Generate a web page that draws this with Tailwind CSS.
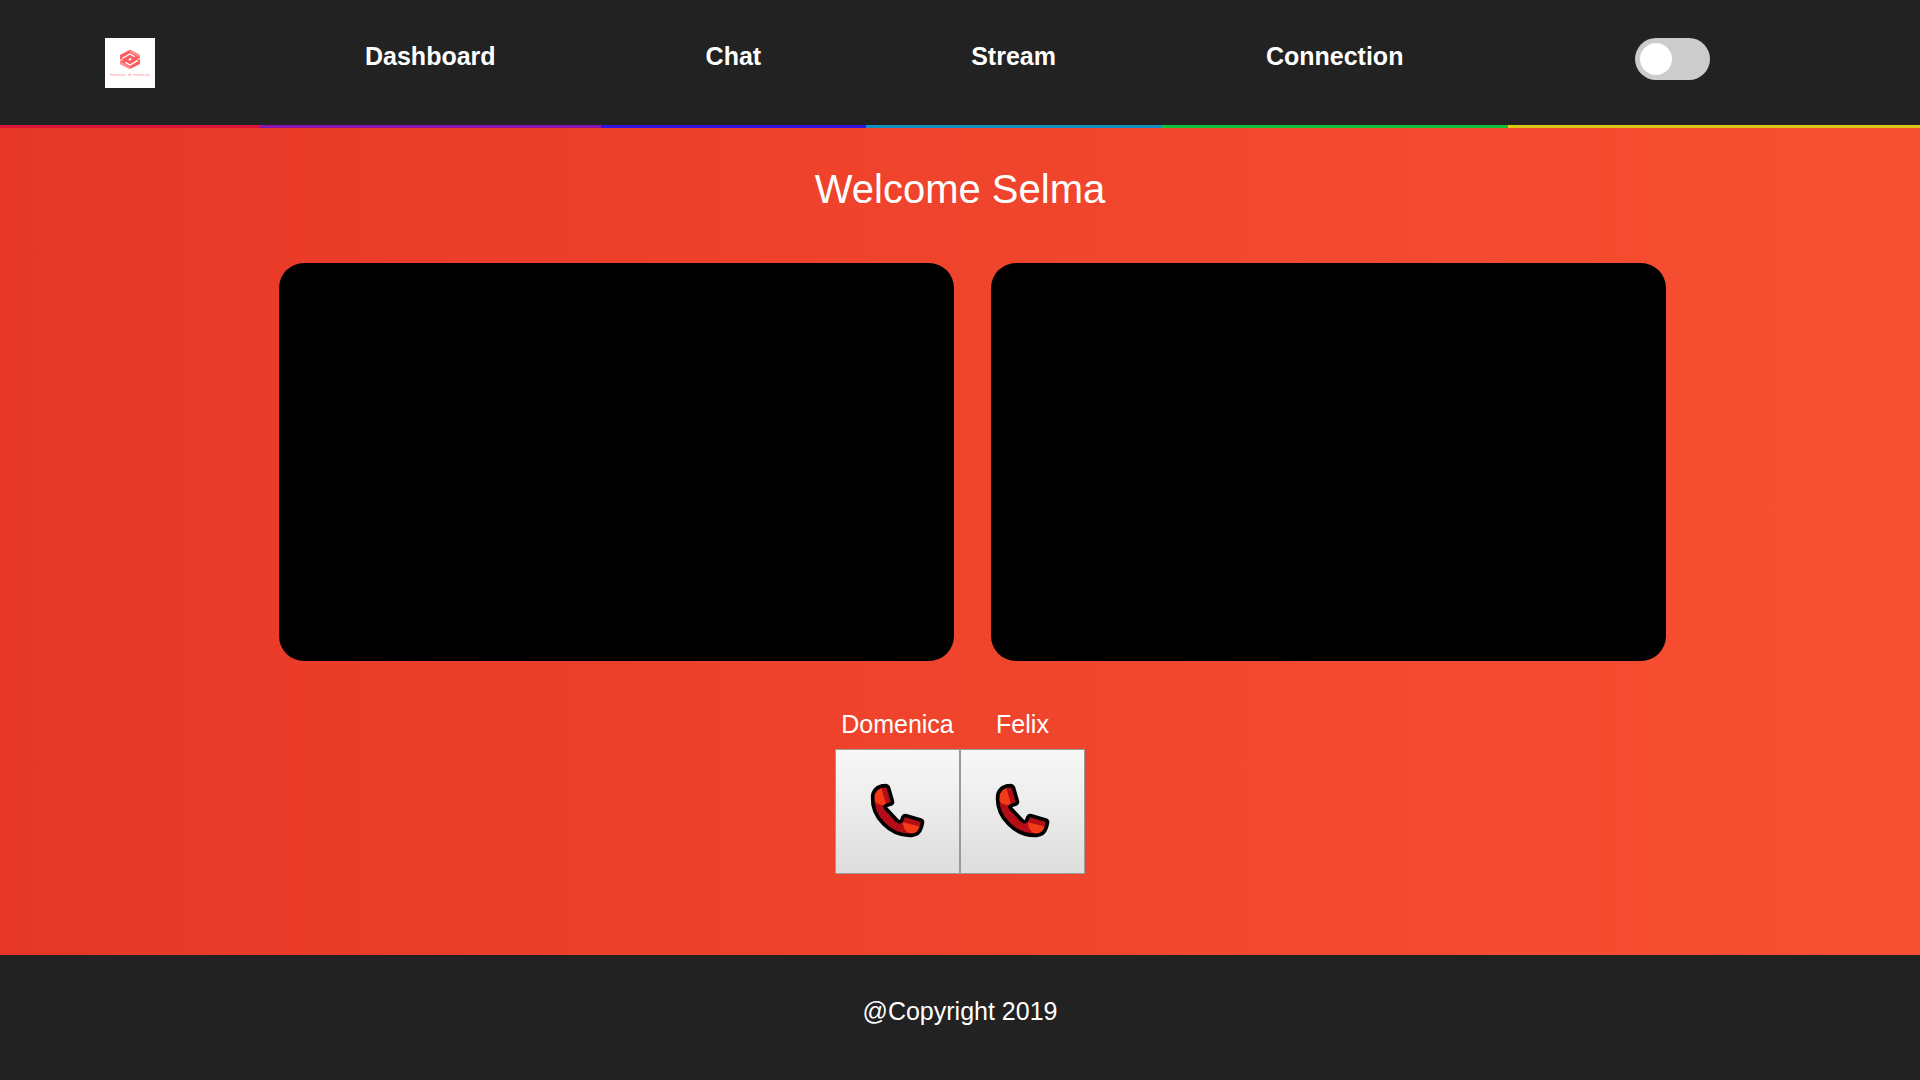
<!DOCTYPE html>
<html lang="en">
<head>
  <meta charset="UTF-8">
  <meta name="viewport" content="width=device-width, initial-scale=1">
  <title>Stream</title>
  <script src="https://cdn.jsdelivr.net/npm/@tailwindcss/browser@4"></script>
</head>
<body class="min-h-screen flex flex-col bg-linear-to-r/srgb from-[#e73827] to-[#f85032] font-['Liberation_Sans',Arial,sans-serif] text-[25px] leading-[38px] text-white">

  <header class="bg-[#222]">
    <nav class="flex h-32 font-bold">
      <a href="#" aria-label="Home" class="pt-[38px] px-[105px] border-b-3 border-[#dc143c]">
        <svg class="block size-[50px] bg-white" viewBox="45 39 150 150">
          <path fill="#ff5c5f" d="M120 74L150 90V117L120 132L90 117V90Z"/>
          <path fill="#ff8f90" d="M120 74L150 90V97L120 82ZM90 109L120 125V132L90 117Z"/>
          <g fill="none" stroke="#fff" stroke-width="4">
            <path d="M97 100L120 87L134 95"/>
            <path d="M143 107L120 120L106 112"/>
            <path d="M88 105H98M142 102H152" stroke-width="3"/>
            <path d="M116 105L124 101" stroke-width="5"/>
          </g>
          <text x="120" y="152" text-anchor="middle" font-family="Liberation Mono, monospace" font-size="9" font-weight="400" fill="#ff7a7c">Formateur de Formation</text>
        </svg>
      </a>
      <a href="#" class="pt-[37px] px-[105px] border-b-3 border-[#8a14ae]">Dashboard</a>
      <a href="#" class="pt-[37px] px-[105px] border-b-3 border-[#3214e0]">Chat</a>
      <a href="#" class="pt-[37px] px-[105px] border-b-3 border-[#148fc0]">Stream</a>
      <a href="#" class="pt-[37px] px-[105px] border-b-3 border-[#14be3c]">Connection</a>
      <div class="grow pt-[38px] pl-[127px] border-b-3 border-[#dcc814]">
        <label class="block w-[75px] h-[42px] p-[5px] rounded-full bg-[#ccc] has-checked:bg-[#2196f3] cursor-pointer">
          <input type="checkbox" aria-label="Toggle theme" class="peer sr-only">
          <span class="block size-8 rounded-full bg-white transition peer-checked:translate-x-8"></span>
        </label>
      </div>
    </nav>
  </header>

  <main class="grow flex flex-col items-center pt-[31px]">
    <h1 class="text-[40px] leading-[60px]">Welcome Selma</h1>

    <div class="flex gap-[37px] mt-11 pl-[25px]">
      <video class="w-[675px] h-[398px] rounded-[25px] bg-black"></video>
      <video class="w-[675px] h-[398px] rounded-[25px] bg-black"></video>
    </div>

    <div class="flex mt-11 text-center">
      <div class="w-[125px]">
        <label for="call-domenica" class="block">Domenica</label>
        <button id="call-domenica" class="flex items-center justify-center w-full h-[125px] mt-[6px] border border-[#999] bg-linear-to-b/srgb from-[#f8f8f8] to-[#ddd] cursor-pointer">
          <svg class="size-[54px] overflow-visible" viewBox="33 45 162 162">
            <path fill="#b30d17" d="M75 47Q82 46 85 52L97 93Q99 99 93 102L81 106Q72 109 77 115L112 152Q122 160 126 149L129 141Q131 135 139 137L182 150Q189 152 187 160L184 172Q177 195 155 196C90 200 35 140 38 82C38 62 52 48 75 47Z"/>
            <path fill="#f43b18" d="M63 50L78 103C60 110 42 98 38 82C38 62 50 52 63 50ZM129 157L184 171C178 192 168 196 155 192C138 188 129 175 129 157Z"/>
            <path fill="none" stroke="#000" stroke-width="11" stroke-linejoin="round" d="M75 47Q82 46 85 52L97 93Q99 99 93 102L81 106Q72 109 77 115L112 152Q122 160 126 149L129 141Q131 135 139 137L182 150Q189 152 187 160L184 172Q177 195 155 196C90 200 35 140 38 82C38 62 52 48 75 47Z"/>
          </svg>
        </button>
      </div>
      <div class="w-[125px]">
        <label for="call-felix" class="block">Felix</label>
        <button id="call-felix" class="flex items-center justify-center w-full h-[125px] mt-[6px] border border-[#999] bg-linear-to-b/srgb from-[#f8f8f8] to-[#ddd] cursor-pointer">
          <svg class="size-[54px] overflow-visible" viewBox="33 45 162 162">
            <path fill="#b30d17" d="M75 47Q82 46 85 52L97 93Q99 99 93 102L81 106Q72 109 77 115L112 152Q122 160 126 149L129 141Q131 135 139 137L182 150Q189 152 187 160L184 172Q177 195 155 196C90 200 35 140 38 82C38 62 52 48 75 47Z"/>
            <path fill="#f43b18" d="M63 50L78 103C60 110 42 98 38 82C38 62 50 52 63 50ZM129 157L184 171C178 192 168 196 155 192C138 188 129 175 129 157Z"/>
            <path fill="none" stroke="#000" stroke-width="11" stroke-linejoin="round" d="M75 47Q82 46 85 52L97 93Q99 99 93 102L81 106Q72 109 77 115L112 152Q122 160 126 149L129 141Q131 135 139 137L182 150Q189 152 187 160L184 172Q177 195 155 196C90 200 35 140 38 82C38 62 52 48 75 47Z"/>
          </svg>
        </button>
      </div>
    </div>
  </main>

  <footer class="h-[125px] pt-[37px] bg-[#222] text-center">
    <p>@Copyright 2019</p>
  </footer>

</body>
</html>
